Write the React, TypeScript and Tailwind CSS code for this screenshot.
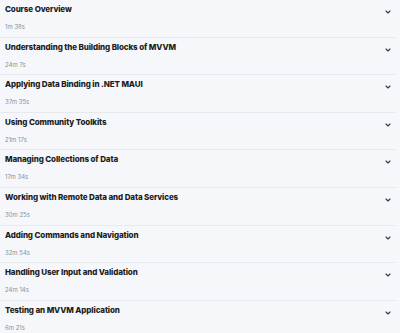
import { ChevronDown } from 'lucide-react';

const modules = [
  { title: 'Course Overview', duration: '1m 38s' },
  { title: 'Understanding the Building Blocks of MVVM', duration: '24m 7s' },
  { title: 'Applying Data Binding in .NET MAUI', duration: '37m 35s' },
  { title: 'Using Community Toolkits', duration: '21m 17s' },
  { title: 'Managing Collections of Data', duration: '17m 34s' },
  { title: 'Working with Remote Data and Data Services', duration: '30m 25s' },
  { title: 'Adding Commands and Navigation', duration: '32m 54s' },
  { title: 'Handling User Input and Validation', duration: '24m 14s' },
  { title: 'Testing an MVVM Application', duration: '6m 21s' },
];

export default function App() {
  return (
    <div className="h-[333px] w-[400px] overflow-hidden bg-[#f5f7fa]" style={{ fontFamily: 'Inter, "Noto Sans", sans-serif' }}>
      {modules.map((m) => (
        <div key={m.title} className="h-[37.6px] pr-[4px]">
          <div className="flex h-full items-start justify-between border-b border-[#e6e9ee] pl-[5px] pr-[4px]">
            <div className="pt-[4px]">
              <div className="text-[8px] font-extrabold leading-[11px] tracking-[-0.12px] text-[#1b1d22]">{m.title}</div>
              <div className="mt-[8px] text-[6px] leading-[7px] text-[#8b909a]">{m.duration}</div>
            </div>
            <ChevronDown className="mt-[8px] h-[8px] w-[8px] text-[#3a3d44]" strokeWidth={3.5} />
          </div>
        </div>
      ))}
    </div>
  );
}
